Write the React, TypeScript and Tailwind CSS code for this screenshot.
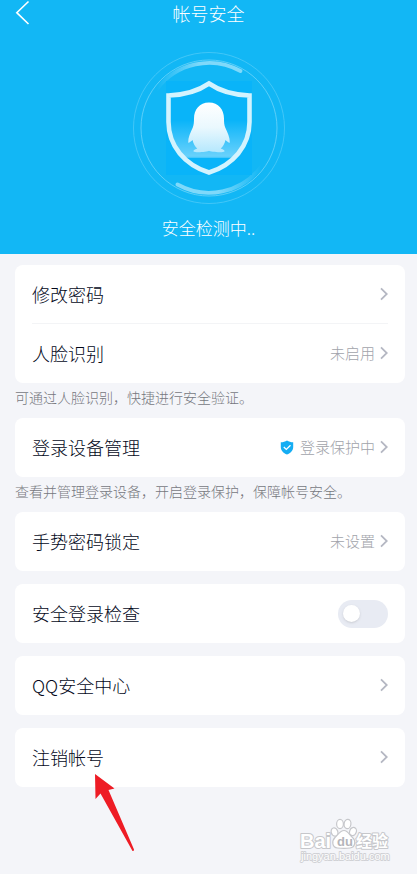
import { useState, type ReactNode } from 'react';
import { clsx } from 'clsx';

const ChevronRight = () => (
  <svg width="8" height="14" viewBox="0 0 8 14" fill="none" stroke="#b4b7c2" strokeWidth="1.8" aria-hidden="true">
    <path d="M1 1.3 6.8 7 1 12.7" />
  </svg>
);

const ShieldCheck = () => (
  <svg width="14" height="15" viewBox="0 0 14 15" aria-hidden="true">
    <path
      d="M7 .4C8.8 1.6 11 2.1 13.2 2.2V7c0 3.5-2.5 6-6.2 7.600C3.300 13 .8 10.500.8 7V2.200C3 2.100 5.200 1.600 7 .4Z"
      fill="#15adf3"
    />
    <path d="m3.800 7 2.500 2.400 4.200-4.200" fill="none" stroke="#fff" strokeWidth="1.3" />
  </svg>
);

const ShieldBadge = () => (
  <svg width="152" height="152" viewBox="0 0 152 152" fill="none" aria-hidden="true">
    <defs>
      <linearGradient id="penguin" x1="0" y1="0" x2="0" y2="1">
        <stop offset="0" stopColor="#fff" />
        <stop offset="0.5" stopColor="#eaf8fe" />
        <stop offset="1" stopColor="#b5e8fd" />
      </linearGradient>
      <linearGradient id="glow" x1="0" y1="68" x2="0" y2="105" gradientUnits="userSpaceOnUse">
        <stop offset="0" stopColor="#fff" stopOpacity="0" />
        <stop offset="1" stopColor="#fff" stopOpacity="0.4" />
      </linearGradient>
      <linearGradient id="arcTop" x1="24" y1="0" x2="110" y2="0" gradientUnits="userSpaceOnUse">
        <stop offset="0" stopColor="#7fd9fa" stopOpacity="0" />
        <stop offset="0.5" stopColor="#7fd9fa" />
        <stop offset="1" stopColor="#7fd9fa" />
      </linearGradient>
      <linearGradient id="arcBottom" x1="128" y1="0" x2="42" y2="0" gradientUnits="userSpaceOnUse">
        <stop offset="0" stopColor="#7fd9fa" stopOpacity="0" />
        <stop offset="0.5" stopColor="#7fd9fa" />
        <stop offset="1" stopColor="#7fd9fa" />
      </linearGradient>
    </defs>

    {/* Rings */}
    <circle cx="76" cy="76" r="75.5" stroke="#58cdf8" strokeWidth="0.7" />
    <circle cx="76" cy="76" r="68" stroke="#6fd4f9" strokeWidth="0.8" />
    <path d="M24 37A65 65 0 0 1 107.500 19" stroke="url(#arcTop)" strokeWidth="3.8" strokeLinecap="round" />
    <path d="M128 115A65 65 0 0 1 44.500 132.500" stroke="url(#arcBottom)" strokeWidth="3.8" strokeLinecap="round" />

    {/* Shield */}
    <rect x="33" y="29" width="86" height="94" fill="#09b4f9" />
    <path d="M36 68H116V70C115 84 109 96 101 104.500H51C43 96 37 84 36 70Z" fill="url(#glow)" />
    <path d="M52 105H101" stroke="#8adcfc" strokeWidth="1.2" />
    <path
      d="M76 31.500C64.500 39.500 50 43 35.500 43.500V70C35.500 94 52 113 76 120.500C100 113 116.500 94 116.500 70V43.500C102 43 87.500 39.500 76 31.500Z"
      stroke="#d3f3fe"
      strokeWidth="4.600"
    />

    {/* Penguin */}
    <path
      d="M76 50.500C66.500 50.500 61 57.500 61 66.500C61 70 60.800 73 59.800 75.500C57.500 80.500 55 85.500 55.200 90.500C55.500 91.500 58 89.500 59.500 88C60.500 92 62 94.500 64.300 96.600C61.500 97.500 60 98.500 60.500 99.500C61.500 101 75 100 76 98.800C77 100 90.500 101 91.500 99.500C92 98.500 90.500 97.500 87.700 96.600C90 94.500 91.500 92 92.500 88C94 89.500 96.500 91.500 96.800 90.500C97 85.500 94.500 80.500 92.200 75.500C91.200 73 91 70 91 66.500C91 57.500 85.500 50.500 76 50.500Z"
      fill="url(#penguin)"
    />
  </svg>
);

const Watermark = () => (
  <svg width="92" height="48" viewBox="0 0 92 48" fill="#fff" stroke="#c6c7cb" strokeWidth="2" className="font-['Liberation_Sans','Noto_Sans_CJK_SC',sans-serif]">
    <g style={{ paintOrder: 'stroke' }} strokeLinejoin="round">
      <text x="1" y="31" fontSize="20" fontWeight="700">Bai</text>
      <text x="57" y="30" fontSize="16" fontWeight="700">经验</text>
      <text x="2" y="43" fontSize="11" strokeWidth="1.8" stroke="#d0d1d5">jingyan.baidu.com</text>
    </g>
    <g strokeWidth="1.2">
      <ellipse cx="35.5" cy="15" rx="3.3" ry="4.2" transform="rotate(-18 35.5 15)" />
      <ellipse cx="41" cy="7" rx="3.4" ry="4.6" />
      <ellipse cx="48.5" cy="7" rx="3.4" ry="4.6" transform="rotate(8 48.5 7)" />
      <ellipse cx="54" cy="14.5" rx="3.3" ry="4.2" transform="rotate(22 54 14.5)" />
      <path d="M45 13.500C49 13.500 50.500 18 53.500 20.500C57 23.500 56.500 30.500 51 31C48 31.300 42 31.300 38.500 31C33 30.500 32.500 24 36 20.500C39 18 41 13.500 45 13.500Z" />
    </g>
    <text x="38" y="29" fontSize="13" fontWeight="700" fill="#b4b5ba" stroke="none">du</text>
  </svg>
);

const Card = ({ children }: { children: ReactNode }) => (
  <div className="rounded-lg bg-white px-[17px]">{children}</div>
);

interface RowProps {
  label: string;
  value?: string;
  icon?: ReactNode;
  divider?: boolean;
}

const Row = ({ label, value, icon, divider }: RowProps) => (
  <button
    type="button"
    className={clsx(
      "flex h-[59px] w-full items-center text-left",
      divider ? "border-b border-[#f3f4f6]" : "pb-px"
    )}
  >
    <span className="flex-1 pb-px text-lg">{label}</span>
    {icon}
    {value && <span className="ml-[6px] text-[15px] text-[#a1a3aa]">{value}</span>}
    <span className="ml-[5px]">
      <ChevronRight />
    </span>
  </button>
);

const Note = ({ children }: { children: ReactNode }) => (
  <p className="h-[35px] pt-1 text-sm text-[#76787e]">{children}</p>
);

const App = () => {
  const [loginCheck, setLoginCheck] = useState(false);

  return (
    <div className="flex min-h-screen flex-col bg-[#f4f5f9] font-['Noto_Sans_CJK_SC',sans-serif] font-light text-[#03081a]">
      <header className="flex flex-col items-center bg-[#12b7f5] pb-[14px] text-white">
        <div className="relative flex h-[26px] w-full items-center justify-center">
          <button type="button" aria-label="返回" className="absolute left-[15px] top-0">
            <svg width="15" height="25" viewBox="0 0 15 25" fill="none" stroke="#fff" strokeWidth="1.6">
              <path d="M13.500 1.500 1.800 12.700 13.500 24" />
            </svg>
          </button>
          <h1 className="text-lg">帐号安全</h1>
        </div>
        <div className="mt-[26px]">
          <ShieldBadge />
        </div>
        <p className="mt-3 text-[17px] leading-6">安全检测中..</p>
      </header>

      <main className="pl-[15px] pr-3 pt-[11px]">
        <Card>
          <Row label="修改密码" divider />
          <Row label="人脸识别" value="未启用" />
        </Card>
        <Note>可通过人脸识别，快捷进行安全验证。</Note>

        <Card>
          <Row label="登录设备管理" value="登录保护中" icon={<ShieldCheck />} />
        </Card>
        <Note>查看并管理登录设备，开启登录保护，保障帐号安全。</Note>

        <div className="flex flex-col gap-[13px]">
          <Card>
            <Row label="手势密码锁定" value="未设置" />
          </Card>
          <Card>
            <div className="flex h-[59px] items-center justify-between">
              <label htmlFor="login-check" className="pb-px text-lg">安全登录检查</label>
              <input
                id="login-check"
                type="checkbox"
                role="switch"
                checked={loginCheck}
                onChange={(e) => setLoginCheck(e.target.checked)}
                className="flex h-7 w-[50px] appearance-none items-center rounded-full bg-[#e8ebf3] px-[5px] before:size-[17px] before:rounded-full before:bg-white before:shadow before:content-[''] checked:justify-end checked:bg-[#12b7f5]"
              />
            </div>
          </Card>
          <Card>
            <Row label="QQ安全中心" />
          </Card>
          <div className="relative">
            <Card>
              <Row label="注销帐号" />
            </Card>
            {/* Pointer to the account removal entry */}
            <svg width="42" height="80" viewBox="0 0 42 80" className="pointer-events-none absolute left-[79px] top-[45px]" aria-hidden="true">
              <path d="M1 1 20.500 15.500 14.500 17 40 76.500Q40 78.500 38.500 78L6.500 20.500 1.500 26Z" fill="#ee1c25" />
            </svg>
          </div>
        </div>
      </main>

      <footer className="mb-[9px] mr-[26px] mt-auto self-end">
        <Watermark />
      </footer>
    </div>
  );
};

export default App;
